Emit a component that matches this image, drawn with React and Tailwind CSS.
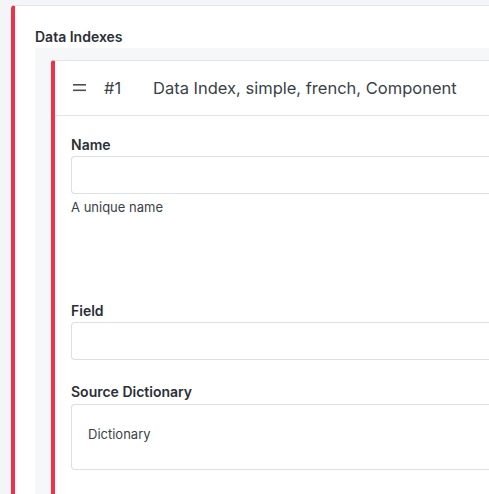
import React from 'react';

const Label = ({ children }) => (
  <div className="text-[14px] leading-5 font-semibold text-[#2b2f36]">{children}</div>
);

const App = () => {
  return (
    <div
      className="min-h-[494px] h-[494px] overflow-hidden bg-[#f4f5f8] pt-[5px] pl-[11px]"
      style={{ fontFamily: 'Inter, "Noto Sans", sans-serif' }}
    >
      {/* Outer card */}
      <div className="h-full bg-white border-l-4 border-l-[#ef3248] border-t border-t-[#e4e6ea] rounded-tl-[4px] pl-5 pt-[21px]">
        <div className="mb-px">
          <Label>Data Indexes</Label>
        </div>

        {/* Indexes panel */}
        <div className="h-full bg-[#f6f7f9] pl-4 pt-3">
          <div className="h-full bg-white border-l-4 border-l-[#ef3248] border-t border-t-[#e2e4e8] rounded-tl-[3px]">
            {/* Header */}
            <div className="h-[55px] flex items-center border-b border-b-[#e2e4e8] pl-[18px] text-[16.5px] text-[#3a3f48] whitespace-nowrap">
              <svg width="14" height="8" viewBox="0 0 14 8" className="mr-[17px]">
                <rect x="0" y="0" width="13" height="1.6" fill="#4a4f58" />
                <rect x="0" y="5.5" width="13" height="1.6" fill="#4a4f58" />
              </svg>
              <span className="w-[49px]">#1</span>
              <span>Data Index, simple, french, Component</span>
            </div>

            {/* Body */}
            <div className="pl-4 pt-[19px]">
              <Label>Name</Label>
              <div className="h-[38px] mt-px border border-[#dcdfe3] rounded-[4px] border-r-0 rounded-r-none" />
              <div className="mt-[3px] text-[13px] leading-5 text-[#3a3f48]">A unique name</div>

              <div className="mt-[84px]">
                <Label>Field</Label>
                <div className="h-[38px] mt-px border border-[#dcdfe3] rounded-[4px] border-r-0 rounded-r-none" />
              </div>

              <div className="mt-[22px]">
                <Label>Source Dictionary</Label>
                <div className="h-[66px] mt-[2px] border border-[#dcdfe3] rounded-[4px] border-r-0 rounded-r-none flex items-center pl-4 pb-1 text-[13px] text-[#3a3f48]">
                  Dictionary
                </div>
              </div>
            </div>
          </div>
        </div>
      </div>
    </div>
  );
};

export default App;
